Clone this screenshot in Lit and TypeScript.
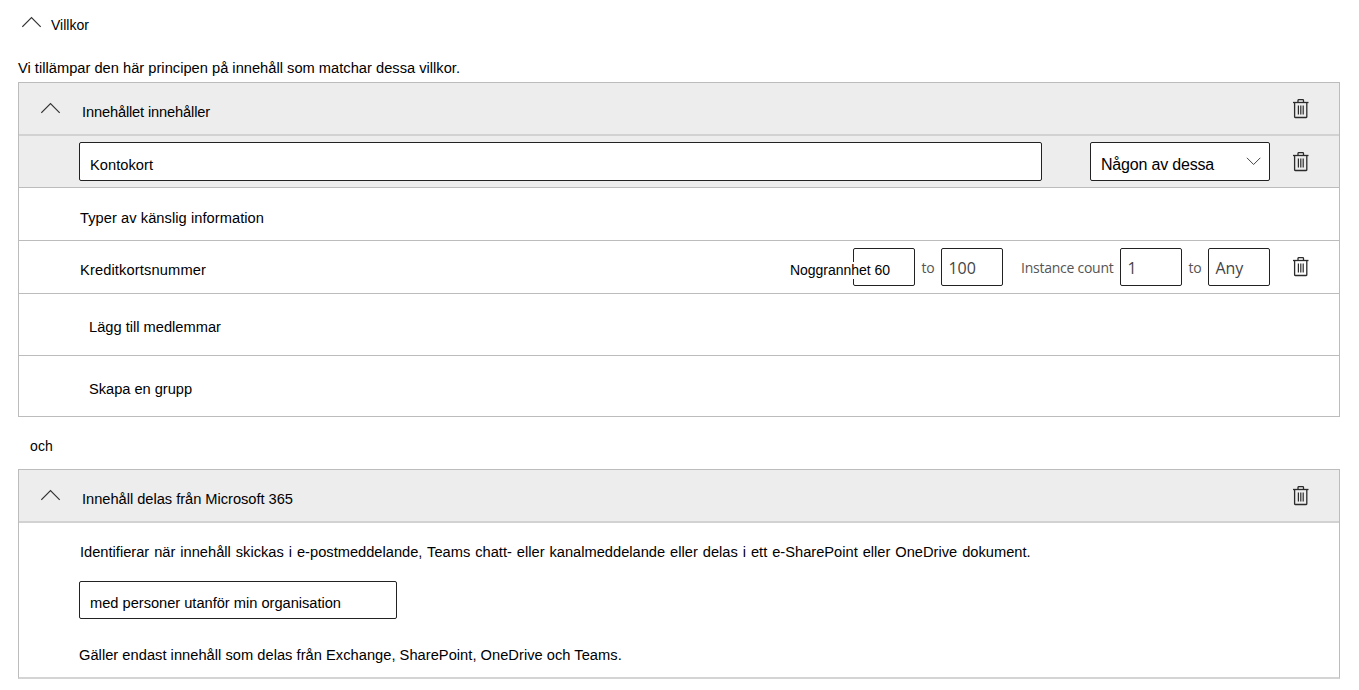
import { LitElement, html, css } from "lit";
import { customElement, property } from "lit/decorators.js";

@customElement("trash-icon")
class TrashIcon extends LitElement {
  static styles = css`
    :host { display: block; flex: none; width: 16px; height: 20px; }
    svg { display: block; }
  `;
  render() {
    return html`<svg width="16" height="20" viewBox="0 0 16 20" fill="none" stroke="#2b2b2b">
      <path d="M0 3.5H15.5" stroke-width="1.3" />
      <path d="M5 3.5V1.5Q5 .6 5.9 .6H9.6Q10.5 .6 10.5 1.5V3.5" stroke-width="1.3" />
      <path d="M1.6 3.5V18Q1.6 18.5 2.2 18.5H13.2Q13.8 18.5 13.8 18V3.5" stroke-width="1.3" />
      <path d="M5.4 6.5V15.5M7.8 6.5V15.5M10.2 6.5V15.5" stroke-width="1.2" />
    </svg>`;
  }
}

@customElement("chevron-icon")
class ChevronIcon extends LitElement {
  @property() direction = "up";
  static styles = css`
    :host { display: block; flex: none; }
    svg { display: block; }
  `;
  render() {
    return this.direction === "up"
      ? html`<svg width="20" height="12" viewBox="0 0 20 12" fill="none" stroke="#333" stroke-width="1.2"><path d="M.3 10.8L9.5 1.5L18.7 10.8" /></svg>`
      : html`<svg width="15" height="9" viewBox="0 0 15 9" fill="none" stroke="#444" stroke-width="1"><path d="M.9 .8L7.6 7.5L14.3 .8" /></svg>`;
  }
}

@customElement("app-root")
class AppRoot extends LitElement {
  static styles = css`
    :host {
      display: block; width: 1359px; height: 690px; overflow: hidden; background: #fff; color: #000;
      font: 14.667px/18px "Liberation Sans", Arial, sans-serif; white-space: nowrap;
    }
    * { box-sizing: border-box; }
    .top { display: flex; height: 59px; padding: 16px 0 0 22px; gap: 9px; font-size: 14px; }
    .intro { height: 23px; padding-left: 18px; letter-spacing: .011px; }
    .card { width: 1322px; margin-left: 18px; border: 1px solid #bcbcbc; }
    .card.second { border-bottom: 2px solid #d4d4d4; }
    .row { display: flex; align-items: flex-start; border-bottom: 1px solid #bcbcbc; padding-right: 30px; }
    .row:last-child { border-bottom: 0; }
    .gray { background: #ededed; }
    .row.head { height: 53px; padding: 20px 30px 0 22px; border-bottom: 2px solid #d2d2d2; }
    .head chevron-icon { margin-top: -1px; }
    .head .title { margin: 0 auto 0 21px; }
    .head trash-icon { margin-top: -4px; }
    .group { height: 52px; padding: 6px 30px 0 60px; }
    .group trash-icon { margin: 10px 0 0 23px; }
    .field { flex: none; border: 1px solid #222; border-radius: 2px; background: #fff; height: 39px; padding: 13px 0 0 10px; }
    .name { width: 963px; margin-right: auto; letter-spacing: .03px; }
    .any { display: flex; justify-content: space-between; width: 180px; padding: 12px 8px 0 10px; font-size: 16px; letter-spacing: -.188px; line-height: 20px; }
    .any chevron-icon { margin-top: 2px; }
    .types { height: 53px; padding: 21px 0 0 61px; letter-spacing: .055px; }
    .card-number { height: 53px; padding: 7px 30px 0 61px; }
    .card-number .label { margin: 13px auto 0 0; letter-spacing: .13px; }
    .accuracy { z-index: 1; position: relative; margin: 14px -37px 0 0; height: 17px; font-size: 14px; line-height: 17px; background: #fff; letter-spacing: -.03px; }
    .ui { font-family: "Open Sans", "Noto Sans", sans-serif; font-size: 14px; line-height: 20px; color: #555; margin-top: 10px; }
    .num { width: 62px; height: 38px; padding: 9px 0 0 6.5px; font: 16px/20px "Open Sans", "Noto Sans", sans-serif; color: #444; letter-spacing: -.05px; }
    .to { width: 26px; text-align: center; letter-spacing: -.2px; }
    .count { width: 117px; padding-left: 18px; letter-spacing: -.25px; }
    .card-number trash-icon { margin: 9px 0 0 23px; }
    .link { height: 62px; padding: 24px 0 0 70px; }
    .link.last { height: 60px; letter-spacing: -.035px; }
    .and { height: 52px; padding: 20px 0 0 30px; font-size: 14px; letter-spacing: .1px; }
    .tight { letter-spacing: -.152px; }
    .shared { letter-spacing: -.025px; }
    .body { height: 154px; padding: 20px 0 0 60px; display: flex; flex-direction: column; align-items: flex-start; }
    .desc { padding-left: 1px; word-spacing: .87px; }
    .with { width: 318px; height: 38px; padding-top: 12px; margin: 20px 0 27px; letter-spacing: -.02px; }
    .applies { letter-spacing: .026px; }
  `;

  render() {
    return html`
      <div class="top"><chevron-icon></chevron-icon><span>Villkor</span></div>
      <div class="intro">Vi tillämpar den här principen på innehåll som matchar dessa villkor.</div>
      <section class="card">
        <div class="row gray head">
          <chevron-icon></chevron-icon><span class="title tight">Innehållet innehåller</span><trash-icon></trash-icon>
        </div>
        <div class="row gray group">
          <div class="field name">Kontokort</div>
          <div class="field any"><span>Någon av dessa</span><chevron-icon direction="down"></chevron-icon></div>
          <trash-icon></trash-icon>
        </div>
        <div class="row types">Typer av känslig information</div>
        <div class="row card-number">
          <span class="label">Kreditkortsnummer</span>
          <span class="accuracy">Noggrannhet 60</span>
          <div class="field num"></div>
          <span class="ui to">to</span>
          <div class="field num">100</div>
          <span class="ui count">Instance count</span>
          <div class="field num">1</div>
          <span class="ui to">to</span>
          <div class="field num">Any</div>
          <trash-icon></trash-icon>
        </div>
        <div class="row link">Lägg till medlemmar</div>
        <div class="row link last">Skapa en grupp</div>
      </section>
      <div class="and">och</div>
      <section class="card second">
        <div class="row gray head">
          <chevron-icon></chevron-icon><span class="title shared">Innehåll delas från Microsoft 365</span><trash-icon></trash-icon>
        </div>
        <div class="body">
          <div class="desc">Identifierar när innehåll skickas i e-postmeddelande, Teams chatt- eller kanalmeddelande eller delas i ett e-SharePoint eller OneDrive dokument.</div>
          <div class="field with">med personer utanför min organisation</div>
          <div class="applies">Gäller endast innehåll som delas från Exchange, SharePoint, OneDrive och Teams.</div>
        </div>
      </section>
    `;
  }
}
